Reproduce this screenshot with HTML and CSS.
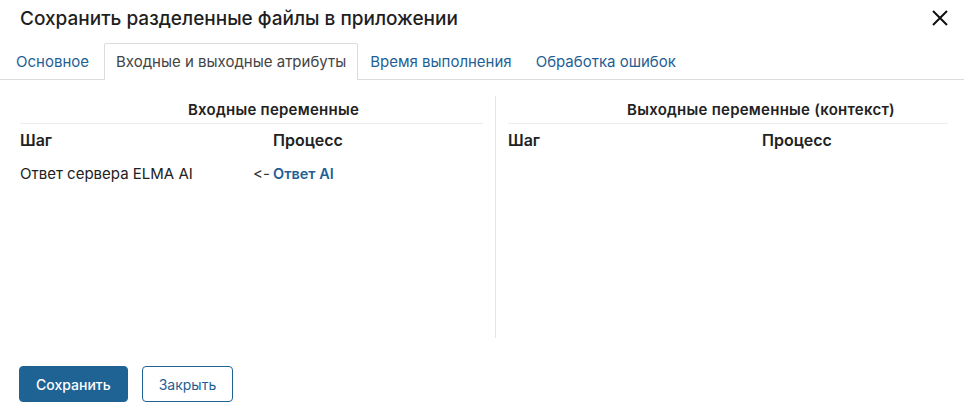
FILE: index.html
```html
<!DOCTYPE html>
<html lang="ru">
<head>
<meta charset="utf-8"/>
<title>Сохранить разделенные файлы в приложении</title>
<link rel="stylesheet" href="styles.css">
</head>
<body>
<div class="dialog">
<div class="dialog-head">
<h1>Сохранить разделенные файлы в приложении</h1>
<button class="close" type="button" aria-label="Закрыть">
<svg width="18" height="18" viewBox="0 0 18 18"><path d="M2 2L16 16M16 2L2 16" stroke="#111" stroke-width="2" fill="none"/></svg>
</button>
</div>

<ul class="tabs">
<li>Основное</li>
<li class="active">Входные и выходные атрибуты</li>
<li>Время выполнения</li>
<li>Обработка ошибок</li>
</ul>

<div class="panes">
<div class="pane pane-in">
<div class="pane-title"><span>Входные переменные</span></div>
<div class="grid head-row">
<span>Шаг</span>
<span></span>
<span>Процесс</span>
</div>
<div class="grid">
<span>Ответ сервера ELMA AI</span>
<span class="arrow">&lt;-</span>
<a class="var" href="#">Ответ AI</a>
</div>
</div>
<div class="divider"></div>
<div class="pane pane-out">
<div class="pane-title"><span>Выходные переменные (контекст)</span></div>
<div class="grid head-row">
<span>Шаг</span>
<span></span>
<span>Процесс</span>
</div>
</div>
</div>

<div class="actions">
<button class="btn primary" type="button">Сохранить</button>
<button class="btn" type="button">Закрыть</button>
</div>
</div>
</body>
</html>
```
FILE: styles.css
```css
body {
	margin: 0;
	font-family: Inter, "Noto Sans", sans-serif;
	font-feature-settings: "calt" 0, "liga" 0;
	color: #222;
	background: #fff;
}
.dialog {
	width: 964px;
	height: 411px;
}
.dialog-head {
	display: flex;
	align-items: center;
	justify-content: space-between;
	height: 36px;
	padding: 0 15px 0 20px;
}
h1 {
	margin: 0;
	font-size: 19px;
	font-weight: 500;
	color: #1f1f1f;
}
.close {
	border: 0;
	background: none;
	padding: 0;
	width: 18px;
	height: 18px;
	cursor: pointer;
}
.tabs {
	display: flex;
	list-style: none;
	margin: 7px 0 0;
	padding: 0 4px;
	border-bottom: 1px solid #dcdcdc;
	height: 36px;
}
.tabs li {
	padding: 0 11px;
	line-height: 35px;
	font-size: 15px;
	color: #1f5f94;
	border: 1px solid transparent;
	border-bottom: 0;
	border-radius: 2px 2px 0 0;
}
.tabs li.active {
	margin-left: 3px;
	color: #444;
	border-color: #dcdcdc;
	background: #fff;
	height: 36px;
}
.panes {
	display: flex;
	padding: 16px 16px 0 20px;
	height: 242px;
}
.pane {
	flex: 1;
	padding-top: 3px;
}
.pane-out {
	flex: 0 0 440px;
}
.divider {
	width: 1px;
	background: #e4e4e4;
	margin: 0 12px;
}
.pane-title {
	text-align: center;
	font-weight: 600;
	font-size: 15px;
	letter-spacing: 0.25px;
	color: #222;
	padding: 1px 0 4px;
	border-bottom: 1px solid #ececec;
	margin-bottom: 7px;
}
.pane-in .pane-title {
	padding-left: 44px;
}
.pane-out .pane-title {
	padding-left: 66px;
}
.grid {
	display: grid;
	grid-template-columns: 233px 20px 1fr;
	font-size: 15px;
	line-height: 18px;
	align-items: center;
}
.pane-out .grid {
	grid-template-columns: 254px 0 1fr;
}
.head-row {
	font-weight: 600;
	font-size: 16px;
	margin-bottom: 16px;
}
.arrow {
	color: #333;
}
.var {
	color: #1f5f94;
	font-weight: 600;
	font-size: 14.5px;
	text-decoration: none;
}
.actions {
	display: flex;
	gap: 14px;
	padding: 28px 19px 0;
}
.btn {
	font-family: inherit;
	font-size: 14px;
	height: 36px;
	padding: 0 16px;
	border: 1px solid #1f6395;
	border-radius: 4px;
	background: #fff;
	color: #1f5f94;
	cursor: pointer;
}
.btn.primary {
	background: #1f6395;
	color: #fff;
	font-weight: 500;
}
```
